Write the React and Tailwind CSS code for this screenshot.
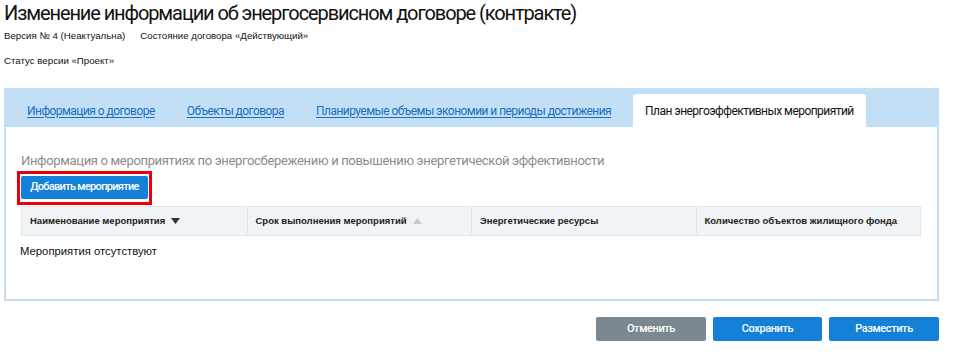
import React from 'react';

const tabs = [
  'Информация о договоре',
  'Объекты договора',
  'Планируемые объемы экономии и периоды достижения',
];

const columns = [
  { title: 'Наименование мероприятия', sort: 'down' },
  { title: 'Срок выполнения мероприятий', sort: 'up' },
  { title: 'Энергетические ресурсы' },
  { title: 'Количество объектов жилищного фонда' },
];

const SortArrow = ({ dir }) => (
  <svg width="9" height="6" viewBox="0 0 9 6" className="ml-[6px] shrink-0">
    {dir === 'down' ? (
      <path d="M0 0h9L4.5 6z" fill="#333" />
    ) : (
      <path d="M0 6h9L4.5 0z" fill="#c8ccd0" />
    )}
  </svg>
);

export default function App() {
  return (
    <div className="w-[962px] h-[361px] bg-white pl-[4px] font-['Roboto',sans-serif] text-[#111] overflow-hidden">
      <h1 className="text-[20px] leading-[26px] font-normal tracking-[-1.1px]">
        Изменение информации об энергосервисном договоре (контракте)
      </h1>

      <div className="mt-[4px] flex gap-[15px] font-['Liberation_Sans',Arial,sans-serif] text-[9.7px] leading-[12px]">
        <span>Версия № 4 (Неактуальна)</span>
        <span>Состояние договора «Действующий»</span>
      </div>
      <div className="mt-[13px] font-['Liberation_Sans',Arial,sans-serif] text-[9.7px] leading-[12px]">
        Статус версии «Проект»
      </div>

      {/* tabs panel */}
      <div className="mt-[21px] w-[935px] bg-[#c3dff5] border-x-2 border-b-2 border-[#c3dff5]">
        <div className="flex items-end h-[39px] pl-[5px] text-[12px] tracking-[-0.55px]">
          {tabs.map((t) => (
            <div key={t} className="px-4 h-[33px] flex items-center">
              <a href="#" className="text-[#1b6ec2] underline underline-offset-2">
                {t}
              </a>
            </div>
          ))}
          <div className="ml-[6px] px-3 h-[33px] flex items-center bg-white rounded-t-[3px] text-[#111]">
            План энергоэффективных мероприятий
          </div>
        </div>

        <div className="bg-white h-[172px] px-[15px] pt-[26px]">
          <div className="text-[13px] leading-[16px] text-[#8b8b8b] tracking-[-0.33px]">
            Информация о мероприятиях по энергосбережению и повышению энергетической эффективности
          </div>
          <div className="mt-[2px] -ml-[4px] inline-flex border-[3px] border-[#e8000b] px-px pt-[2px] pb-[3px]">
            <button className="w-[127px] h-[23px] rounded-[2px] bg-[#1580d8] text-white text-[11px] font-medium tracking-[-0.7px]">
              Добавить мероприятие
            </button>
          </div>
          <div className="mt-px w-[900px] h-[30px] grid grid-cols-4 bg-[#f0f4f7] border border-[#e2e7eb] font-['Liberation_Sans',Arial,sans-serif] text-[9.5px] font-bold text-[#222]">
            {columns.map((c, i) => (
              <div
                key={c.title}
                className={`flex items-center pl-[8px] ${i > 0 ? 'border-l border-[#e2e7eb]' : ''}`}
              >
                {c.title}
                {c.sort && <SortArrow dir={c.sort} />}
              </div>
            ))}
          </div>
          <div className="mt-[7px] -ml-px font-['Liberation_Sans',Arial,sans-serif] text-[11.3px] leading-[16px]">
            Мероприятия отсутствуют
          </div>
        </div>
      </div>

      <div className="w-[935px] mt-[16px] flex justify-end gap-[7px] text-[11px] font-medium tracking-[-0.4px] text-white">
        <button className="w-[110px] h-[24px] rounded-[2px] bg-[#7b8891]">
          Отменить
        </button>
        <button className="w-[109px] h-[24px] rounded-[2px] bg-[#1580d8]">
          Сохранить
        </button>
        <button className="w-[110px] h-[24px] rounded-[2px] bg-[#1580d8]">
          Разместить
        </button>
      </div>
    </div>
  );
}
